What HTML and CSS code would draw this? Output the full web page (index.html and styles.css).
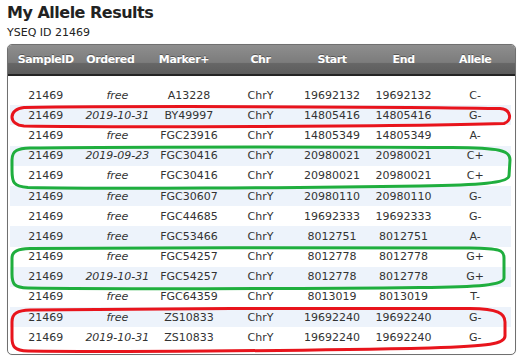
FILE: index.html
```html
<!DOCTYPE html>
<html>
<head>
<meta charset="utf-8">
<title>My Allele Results</title>
<link rel="stylesheet" href="styles.css">
</head>
<body>
<div class="page">
  <h1 class="title">My Allele Results</h1>
  <div class="subtitle">YSEQ ID 21469</div>
  <div class="results">
    <div class="head">
      <div>SampleID</div>
      <div class="h-ordered">Ordered</div>
      <div class="h-marker">Marker+</div>
      <div>Chr</div>
      <div>Start</div>
      <div>End</div>
      <div>Allele</div>
    </div>
    <div class="body">
      <table class="grid">
        <tbody>
          <tr><td>21469</td><td class="ord">free</td><td>A13228</td><td>ChrY</td><td>19692132</td><td>19692132</td><td>C-</td></tr>
          <tr><td>21469</td><td class="ord">2019-10-31</td><td>BY49997</td><td>ChrY</td><td>14805416</td><td>14805416</td><td>G-</td></tr>
          <tr><td>21469</td><td class="ord">free</td><td>FGC23916</td><td>ChrY</td><td>14805349</td><td>14805349</td><td>A-</td></tr>
          <tr><td>21469</td><td class="ord">2019-09-23</td><td>FGC30416</td><td>ChrY</td><td>20980021</td><td>20980021</td><td>C+</td></tr>
          <tr><td>21469</td><td class="ord">free</td><td>FGC30416</td><td>ChrY</td><td>20980021</td><td>20980021</td><td>C+</td></tr>
          <tr><td>21469</td><td class="ord">free</td><td>FGC30607</td><td>ChrY</td><td>20980110</td><td>20980110</td><td>G-</td></tr>
          <tr><td>21469</td><td class="ord">free</td><td>FGC44685</td><td>ChrY</td><td>19692333</td><td>19692333</td><td>G-</td></tr>
          <tr><td>21469</td><td class="ord">free</td><td>FGC53466</td><td>ChrY</td><td>8012751</td><td>8012751</td><td>A-</td></tr>
          <tr><td>21469</td><td class="ord">free</td><td>FGC54257</td><td>ChrY</td><td>8012778</td><td>8012778</td><td>G+</td></tr>
          <tr><td>21469</td><td class="ord">2019-10-31</td><td>FGC54257</td><td>ChrY</td><td>8012778</td><td>8012778</td><td>G+</td></tr>
          <tr><td>21469</td><td class="ord">free</td><td>FGC64359</td><td>ChrY</td><td>8013019</td><td>8013019</td><td>T-</td></tr>
          <tr><td>21469</td><td class="ord">free</td><td>ZS10833</td><td>ChrY</td><td>19692240</td><td>19692240</td><td>G-</td></tr>
          <tr><td>21469</td><td class="ord">2019-10-31</td><td>ZS10833</td><td>ChrY</td><td>19692240</td><td>19692240</td><td>G-</td></tr>
        </tbody>
      </table>
    </div>
  </div>
  <svg class="marks" width="525" height="363" viewBox="0 0 525 363" xmlns="http://www.w3.org/2000/svg">
    <path class="red" d="M 24 107.5 C 120 106, 380 106.5, 500 108.5 C 512 109.5, 512 121, 504 123.5 C 400 126.5, 120 127.5, 24 126 C 8 125, 8 109, 24 107.5 Z"/>
    <path class="green" d="M 30 148 C 150 146.5, 380 147, 452 147.5 C 500 148, 510 150, 510 160 L 509 176 C 508 183, 480 185, 420 186 C 300 188, 100 189, 28 187.5 C 13 186.5, 12 182, 12 170 L 12 160 C 12 150, 18 148.5, 30 148 Z"/>
    <path class="green" d="M 30 248.5 C 150 247.5, 380 247.5, 470 248 C 500 248.5, 504 250, 504 258 L 504 278 C 504 285, 480 287, 420 287.5 C 300 289, 100 289, 28 288 C 14 287.5, 12 284, 12 274 L 12 258 C 12 251, 18 249, 30 248.5 Z"/>
    <path class="red" d="M 30 310 C 150 308.5, 380 308, 470 308.5 C 498 309, 505 313, 505 322 L 505 336 C 505 344, 490 346, 430 348 C 300 351, 100 352, 28 351 C 14 350.5, 12 346, 12 338 L 12 322 C 12 313, 18 310.5, 30 310 Z"/>
  </svg>
</div>
</body>
</html>
```

FILE: styles.css
```css
html, body {
  margin: 0;
  padding: 0;
  background: #ffffff;
}

.page {
  position: relative;
  width: 525px;
  height: 363px;
  padding: 3px 9px 0 7px;
  box-sizing: border-box;
  font-family: "DejaVu Sans", Verdana, sans-serif;
  color: #333333;
}

.title {
  margin: 0;
  font-size: 16px;
  line-height: 20px;
  font-weight: bold;
  letter-spacing: -0.5px;
  color: #222222;
}

.subtitle {
  margin-top: 3px;
  font-size: 11px;
  line-height: 14px;
  color: #222222;
}

.results {
  margin-top: 4px;
  border: 1px solid #707070;
  border-radius: 5px;
  overflow: hidden;
  background: #ffffff;
  box-shadow: 0 0 1px rgba(0,0,0,0.15);
}

.head {
  display: grid;
  grid-template-columns: repeat(7, 1fr);
  height: 29px;
  padding: 0 4px 0 2px;
  align-items: center;
  background: linear-gradient(#8e8e8e 0%, #7c7c7c 60%, #666666 64%, #5c5c5c 100%);
  border-bottom: 2px solid #242424;
  color: #ffffff;
  font-size: 11px;
  font-weight: bold;
  letter-spacing: -0.4px;
  text-align: center;
  text-shadow: 0 -1px 0 rgba(0,0,0,0.35);
}

.h-ordered {
  padding-right: 14px;
}

.h-marker {
  padding-right: 10px;
}

.body {
  padding: 9px 4px 7px 2px;
}

.grid {
  width: 100%;
  table-layout: fixed;
  border-collapse: collapse;
  font-size: 11px;
}

.grid td {
  height: 20.2px;
  padding: 0;
  text-align: center;
  vertical-align: middle;
  white-space: nowrap;
  color: #333333;
}

.grid tr:nth-child(even) td {
  background: #edf3fb;
}

.grid td.ord {
  font-style: italic;
}

.marks {
  position: absolute;
  left: 0;
  top: 0;
  pointer-events: none;
}

.marks path {
  fill: none;
  stroke-width: 3px;
  stroke-linejoin: round;
}

.marks .red {
  stroke: #e8141c;
}

.marks .green {
  stroke: #1fae3e;
}
```
